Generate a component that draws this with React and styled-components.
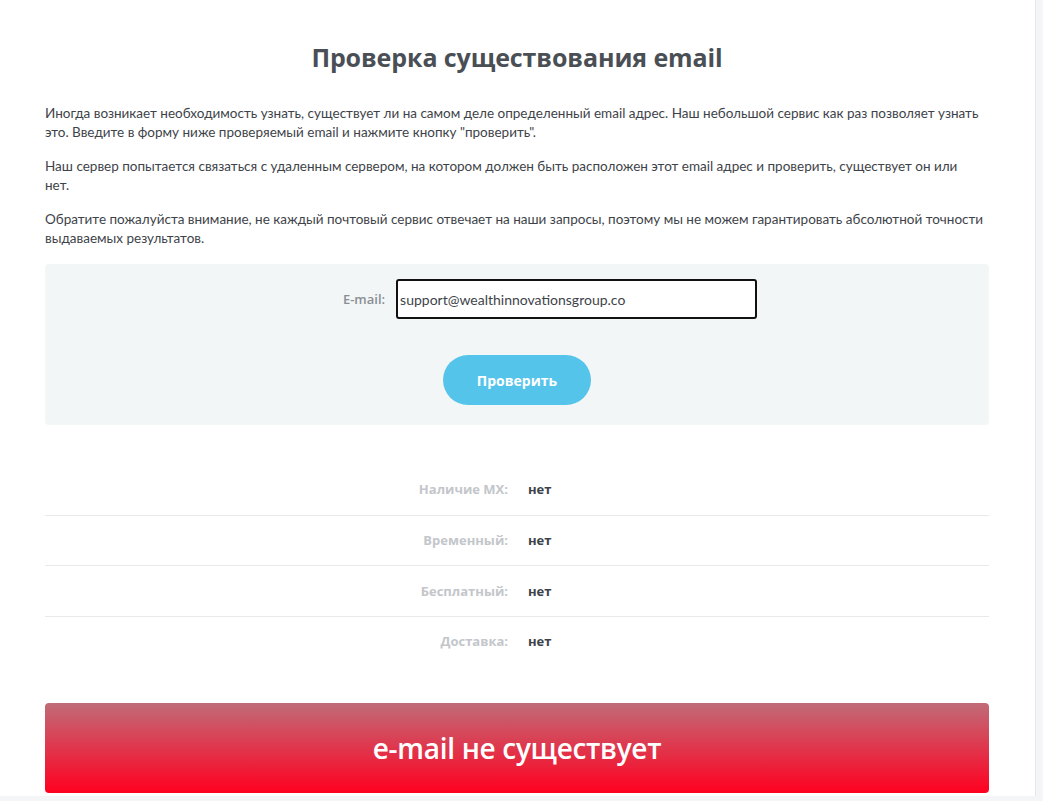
import React from 'react'
import styled, {createGlobalStyle} from 'styled-components'

const Global = createGlobalStyle`
  html, body {
    margin: 0;
    padding: 0;
    background: #f4f5f6;
  }
  * { box-sizing: border-box; }
`;

const Page = styled.div`
  width: 1036px;
  height: 796px;
  overflow: hidden;
  background: #fff;
  border-right: 1px solid #e6e7e9;
  padding: 40px 46px 3px 45px;
  font-family: "Open Sans", "Noto Sans", sans-serif;
  color: #3e4349;
`;

const Title = styled.h1`
  margin: 0 0 30px;
  text-align: center;
  font-size: 25px;
  font-weight: 700;
  color: #4a4f55;
  line-height: 34px;
  letter-spacing: -0.1px;
`;

const Para = styled.p`
  margin: 0 0 15px;
  font-family: Lato, "Open Sans", sans-serif;
  font-size: 13.5px;
  line-height: 19px;
  color: #3e4349;
`;

const FormBox = styled.form`
  margin-top: 16px;
  background: #f3f6f7;
  border-radius: 4px;
  padding: 15px 0 20px;
  display: flex;
  flex-direction: column;
  align-items: center;
`;

const Field = styled.div`
  display: flex;
  align-items: center;
  gap: 11px;
  margin-left: 66px;
`;

const Label = styled.label`
  font-size: 13px;
  font-weight: 600;
  color: #8a8f94;
`;

const Input = styled.input`
  width: 361px;
  height: 40px;
  border: 2px solid #111;
  border-radius: 3px;
  padding: 0 2px;
  font-family: Lato, "Open Sans", sans-serif;
  font-size: 14px;
  color: #3e4349;
  background: #fff;
  outline: none;
`;

const Button = styled.button`
  margin-top: 36px;
  width: 148px;
  height: 50px;
  border: none;
  border-radius: 25px;
  background: #55c4ea;
  color: #fff;
  font-family: "Open Sans", sans-serif;
  font-weight: 700;
  font-size: 14px;
  cursor: pointer;
`;

const Results = styled.div`
  margin-top: 39px;
`;

const Row = styled.div`
  display: grid;
  grid-template-columns: 463px 1fr;
  column-gap: 20px;
  align-items: center;
  height: 50.5px;
  border-top: ${p => (p.first ? 'none' : '1px solid #e8e9ea')};
`;

const Key = styled.span`
  text-align: right;
  font-size: 13px;
  font-weight: 700;
  color: #c3c6ca;
`;

const Val = styled.span`
  font-size: 13px;
  font-weight: 700;
  color: #3e4349;
`;

const Verdict = styled.div`
  margin-top: 37px;
  height: 90px;
  border-radius: 4px;
  background: linear-gradient(to bottom, #c06c78, #ff0020);
  display: flex;
  align-items: center;
  justify-content: center;
  color: #fff;
  font-size: 28px;
  font-weight: 600;
  letter-spacing: -0.3px;
`;

const rows = [
  ['Наличие MX:', 'нет'],
  ['Временный:', 'нет'],
  ['Бесплатный:', 'нет'],
  ['Доставка:', 'нет'],
];

export default function App() {
  return (
    <Page>
      <Global />
      <Title>Проверка существования email</Title>
      <Para>
        Иногда возникает необходимость узнать, существует ли на самом деле определенный email адрес. Наш небольшой сервис как раз позволяет узнать
        это. Введите в форму ниже проверяемый email и нажмите кнопку "проверить".
      </Para>
      <Para>
        Наш сервер попытается связаться с удаленным сервером, на котором должен быть расположен этот email адрес и проверить, существует он или<br />
        нет.
      </Para>
      <Para>
        Обратите пожалуйста внимание, не каждый почтовый сервис отвечает на наши запросы, поэтому мы не можем гарантировать абсолютной точности
        выдаваемых результатов.
      </Para>
      <FormBox onSubmit={e => e.preventDefault()}>
        <Field>
          <Label>E-mail:</Label>
          <Input defaultValue="support@wealthinnovationsgroup.co" />
        </Field>
        <Button type="submit">Проверить</Button>
      </FormBox>
      <Results>
        {rows.map(([k, v], i) => (
          <Row key={k} first={i === 0}>
            <Key>{k}</Key>
            <Val>{v}</Val>
          </Row>
        ))}
      </Results>
      <Verdict>e-mail не существует</Verdict>
    </Page>
  )
}
